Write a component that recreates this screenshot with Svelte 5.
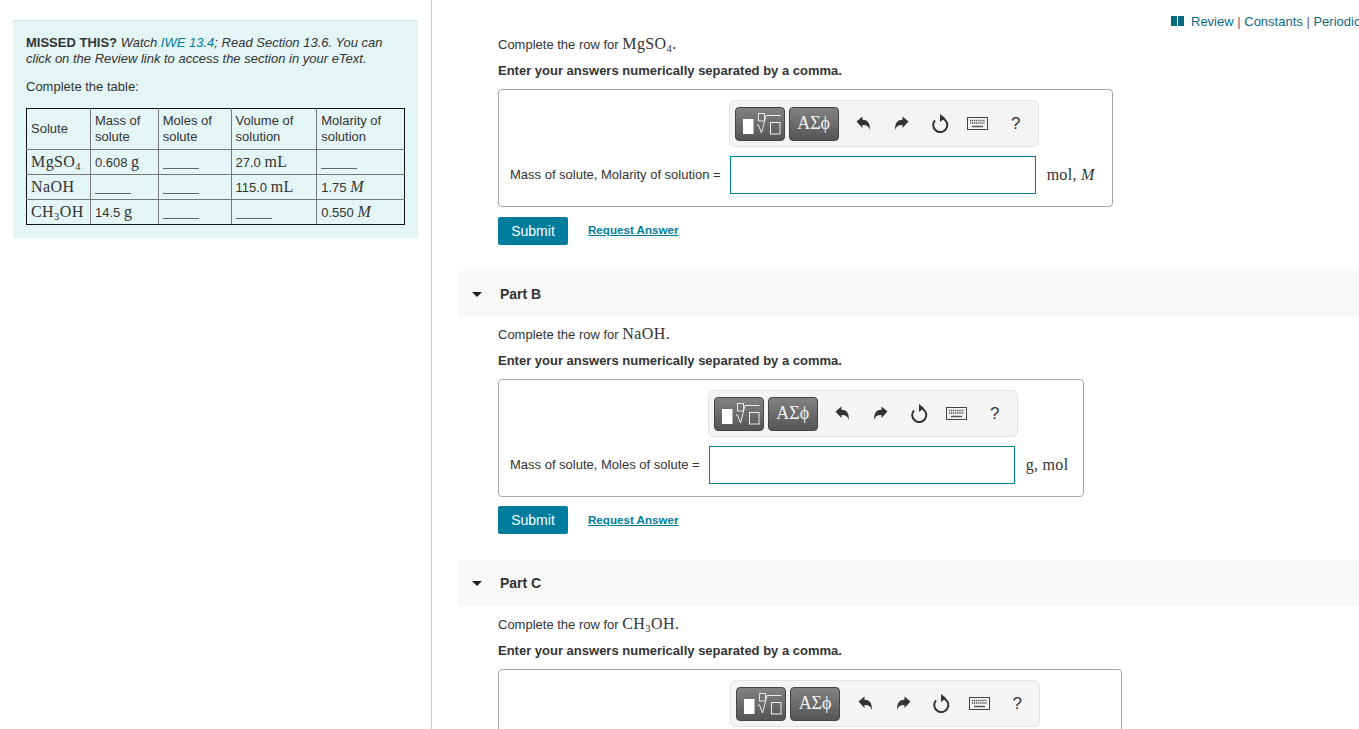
<script>
  const parts = [
    { formula: ['MgSO', '4'], label: 'Mass of solute, Molarity of solution =', unit: 'mol, ', unitVar: 'M', width: 615 },
    { title: 'Part B', formula: ['NaOH'], label: 'Mass of solute, Moles of solute =', unit: 'g, mol', unitVar: '', width: 586 },
    { title: 'Part C', formula: ['CH', '3', 'OH'], label: 'Moles of solute, Volume of solution =', unit: 'mol, mL', unitVar: '', width: 624 }
  ];
</script>

{#snippet formula(bits)}
  <span class="math">{#each bits as bit, i}{#if i % 2 === 1}<sub>{bit}</sub>{:else}{bit}{/if}{/each}</span>
{/snippet}

{#snippet toolbar()}
  <div class="toolbar">
    <button class="tool templates" aria-label="Templates">
      <svg width="48" height="32" viewBox="1 1 48 32">
        <rect x="8" y="12" width="10.500" height="15" fill="#fff" />
        <rect x="23.500" y="6.500" width="6" height="7.500" fill="none" stroke="#e4e4e4" />
        <path d="M22 18h1.500l3 8 4.500-17.500h14.500" fill="none" stroke="#eee" />
        <rect x="35.500" y="15.500" width="9.500" height="11.500" fill="none" stroke="#eee" />
      </svg>
    </button>
    <button class="tool greek">ΑΣϕ</button>
    <div class="actions">
      <span class="act"><svg width="15" height="15" viewBox="0 0 15 15"><path d="M.5 5.500 6.500.5v3.200c4.800 0 7.800 3 7.300 10.300-1.200-3.800-3.300-5-7.300-5v3z" fill="#333" /></svg></span>
      <span class="act"><svg width="15" height="15" viewBox="0 0 15 15"><path d="M14.500 5.500 8.500.5v3.200c-4.800 0-7.800 3-7.300 10.300 1.200-3.800 3.300-5 7.300-5v3z" fill="#333" /></svg></span>
      <span class="act"><svg width="18" height="19" viewBox="0 0 18 19"><path d="M10 4.100a7 7 0 1 1-6 2.300" fill="none" stroke="#333" stroke-width="2" /><path d="M9 0v8l5-4z" fill="#333" /></svg></span>
      <span class="act"><svg width="21" height="13" viewBox="0 0 21 13">
        <rect x=".5" y=".5" width="20" height="12" fill="#f4f4f4" stroke="#444" />
        <path d="M3 3.500h15M3 6h15" stroke="#555" stroke-width="1.400" stroke-dasharray="1.200 .7" />
        <path d="M5 9.500h11" stroke="#555" stroke-width="1.500" />
      </svg></span>
      <span class="act help">?</span>
    </div>
  </div>
{/snippet}

<div class="page">
  <aside class="left">
    <div class="note">
      <p class="missed"><b>MISSED THIS?</b> <i>Watch <span class="link">IWE 13.4</span>; Read Section 13.6. You can click on the Review link to access the section in your eText.</i></p>
      <p class="intro">Complete the table:</p>
      <table>
        <tbody>
          <tr class="head">
            <td class="c1">Solute</td>
            <td class="c2">Mass of<br />solute</td>
            <td class="c3">Moles of<br />solute</td>
            <td class="c4">Volume of<br />solution</td>
            <td class="c5">Molarity of<br />solution</td>
          </tr>
          <tr>
            <td>{@render formula(['MgSO', '4'])}</td>
            <td>0.608 <span class="math">g</span></td>
            <td><span class="blank"></span></td>
            <td>27.0 <span class="math">mL</span></td>
            <td><span class="blank"></span></td>
          </tr>
          <tr>
            <td>{@render formula(['NaOH'])}</td>
            <td><span class="blank"></span></td>
            <td><span class="blank"></span></td>
            <td>115.0 <span class="math">mL</span></td>
            <td>1.75 <i class="math">M</i></td>
          </tr>
          <tr>
            <td>{@render formula(['CH', '3', 'OH'])}</td>
            <td>14.5 <span class="math">g</span></td>
            <td><span class="blank"></span></td>
            <td><span class="blank"></span></td>
            <td>0.550 <i class="math">M</i></td>
          </tr>
        </tbody>
      </table>
    </div>
  </aside>

  <main class="right">
    <div class="topbar">
      <svg width="13" height="10" viewBox="0 0 13 10"><path d="M0 0h6v10H0zM7 0h6v10H7z" fill="#0b6a83" /></svg>
      <span class="toplinks">Review <em>|</em> Constants <em>|</em> Periodic Table</span>
    </div>

    {#each parts as part, i}
      {#if part.title}
        <div class="part-head">
          <span class="caret"></span>
          <span>{part.title}</span>
        </div>
      {/if}
      <section class="part" class:first={i === 0}>
        <p class="ask">Complete the row for {@render formula(part.formula)}<span class="math">.</span></p>
        <p class="enter">Enter your answers numerically separated by a comma.</p>
        <div class="answer" style="width: {part.width}px">
          <div class="grid">
            <div></div>
            {@render toolbar()}
            <label for="ans{i}">{part.label}</label>
            <input id="ans{i}" type="text" />
            <span class="unit">{part.unit}<i>{part.unitVar}</i></span>
          </div>
        </div>
        {#if i < 2}
          <div class="buttons">
            <button class="submit">Submit</button>
            <span class="request">Request Answer</span>
          </div>
        {/if}
      </section>
    {/each}
  </main>
</div>

<style>
  :global(body) {
    margin: 0;
    overflow: hidden;
    background: #fff;
  }

  .page {
    display: flex;
    height: 729px;
    overflow: hidden;
    font-family: "Liberation Sans", Arial, sans-serif;
    font-size: 13px;
    color: #333;
  }

  .left {
    box-sizing: border-box;
    flex: 0 0 432px;
    padding: 20px 13px 0;
    border-right: 1px solid #c5d1de;
  }

  .note {
    box-sizing: border-box;
    width: 405px;
    height: 218px;
    padding: 14px 13px 0;
    background: #e4f5f5;
    border-top: 1px solid #d5e3e6;
  }

  p {
    margin: 0;
  }

  .missed {
    line-height: 16px;
    width: 370px;
  }

  .link {
    color: #007c9c;
  }

  .intro {
    margin-top: 12px;
    line-height: 16px;
  }

  table {
    width: 379px;
    margin-top: 13px;
    border-collapse: collapse;
    font-size: 13px;
    line-height: 16px;
  }

  td {
    box-sizing: border-box;
    padding: 0 4px;
    border: 1px solid #777;
    height: 25px;
    white-space: nowrap;
  }

  tr:first-child td {
    border-top-color: #111;
  }

  tr:last-child td {
    border-bottom-color: #111;
  }

  td:first-child {
    border-left-color: #111;
  }

  td:last-child {
    border-right-color: #111;
  }

  .head td {
    height: 41px;
  }

  .c1 { width: 64px; }
  .c2 { width: 68px; }
  .c3 { width: 73px; }
  .c4 { width: 86px; }
  .c5 { width: 88px; }

  .math {
    font-family: "Liberation Serif", "Times New Roman", serif;
    font-size: 16px;
    letter-spacing: .4px;
  }

  sub {
    font-size: 10.500px;
    line-height: 0;
    vertical-align: -3px;
  }

  .blank {
    display: inline-block;
    width: 36px;
    height: 12px;
    border-bottom: 1px solid #666;
    vertical-align: -3px;
  }

  .right {
    flex: 1;
    min-width: 0;
  }

  .topbar {
    display: flex;
    align-items: center;
    gap: 7px;
    height: 14px;
    padding: 14px 0 0 739px;
    white-space: nowrap;
    color: #0b6a83;
    font-size: 13px;
  }

  .topbar svg {
    flex: none;
  }

  .toplinks {
    flex: none;
  }

  .toplinks em {
    font-style: normal;
    color: #666;
  }

  .part {
    padding-left: 66px;
  }

  .part.first {
    padding-top: 7px;
  }

  .part:not(.first) {
    padding-top: 8px;
  }

  .part:last-child {
    padding-top: 9px;
  }

  .ask {
    line-height: 18px;
    height: 18px;
  }

  .enter {
    margin-top: 9px;
    height: 18px;
    line-height: 18px;
    font-weight: bold;
  }

  .answer {
    box-sizing: border-box;
    height: 118px;
    margin-top: 9px;
    padding: 10px 0 0 11px;
    border: 1px solid #a8a8a8;
    border-radius: 4px;
  }

  .grid {
    display: grid;
    grid-template-columns: max-content 306px max-content;
    align-items: center;
    column-gap: 9px;
    row-gap: 9px;
  }

  .grid label {
    margin-bottom: 2px;
    white-space: nowrap;
  }

  .grid input {
    box-sizing: border-box;
    width: 306px;
    height: 38px;
    padding: 0;
    border: 1px solid #007c9c;
    background: #fff;
    outline: none;
  }

  .unit {
    margin-left: 2px;
    font-family: "Liberation Serif", serif;
    font-size: 16px;
    letter-spacing: .3px;
    white-space: nowrap;
  }

  .toolbar {
    box-sizing: border-box;
    display: flex;
    align-items: center;
    width: 310px;
    height: 47px;
    margin-left: -1px;
    padding: 0 5px;
    background: #f4f4f4;
    border: 1px solid #e2e2e2;
    border-radius: 6px;
    grid-column: 2 / 4;
  }

  .tool {
    box-sizing: border-box;
    flex: none;
    height: 34px;
    padding: 0;
    border: 1px solid #444;
    border-radius: 4px;
    background: linear-gradient(#828282, #555);
    color: #f2f2f2;
  }

  .templates {
    width: 50px;
  }

  .templates svg {
    display: block;
  }

  .greek {
    width: 50px;
    margin-left: 4px;
    font-family: "Liberation Serif", serif;
    font-size: 18px;
  }

  .actions {
    display: flex;
    align-items: center;
    margin-left: 6px;
    color: #333;
  }

  .act {
    display: flex;
    justify-content: center;
    align-items: center;
    width: 38px;
  }

  .help {
    font-size: 17px;
  }

  .buttons {
    display: flex;
    align-items: center;
    gap: 20px;
    margin-top: 10px;
  }

  .part:not(.first) .buttons {
    margin-top: 9px;
  }

  .submit {
    width: 70px;
    height: 28px;
    padding: 0;
    border: 0;
    border-radius: 2px;
    background: #007c9c;
    color: #fff;
    font: 14px "Liberation Sans", Arial, sans-serif;
  }

  .request {
    margin-top: -2px;
    color: #007c9c;
    font-size: 11.600px;
    font-weight: bold;
    text-decoration: underline;
  }

  .first .request {
    margin-top: -4px;
  }

  .part-head {
    display: flex;
    align-items: center;
    gap: 18px;
    height: 46px;
    margin: 26px 0 0 26px;
    padding-left: 14px;
    background: #f8f8f8;
    font-weight: bold;
    font-size: 14px;
    color: #333;
  }

  .caret {
    width: 0;
    height: 0;
    border-left: 5px solid transparent;
    border-right: 5px solid transparent;
    border-top: 5px solid #222;
  }
</style>
